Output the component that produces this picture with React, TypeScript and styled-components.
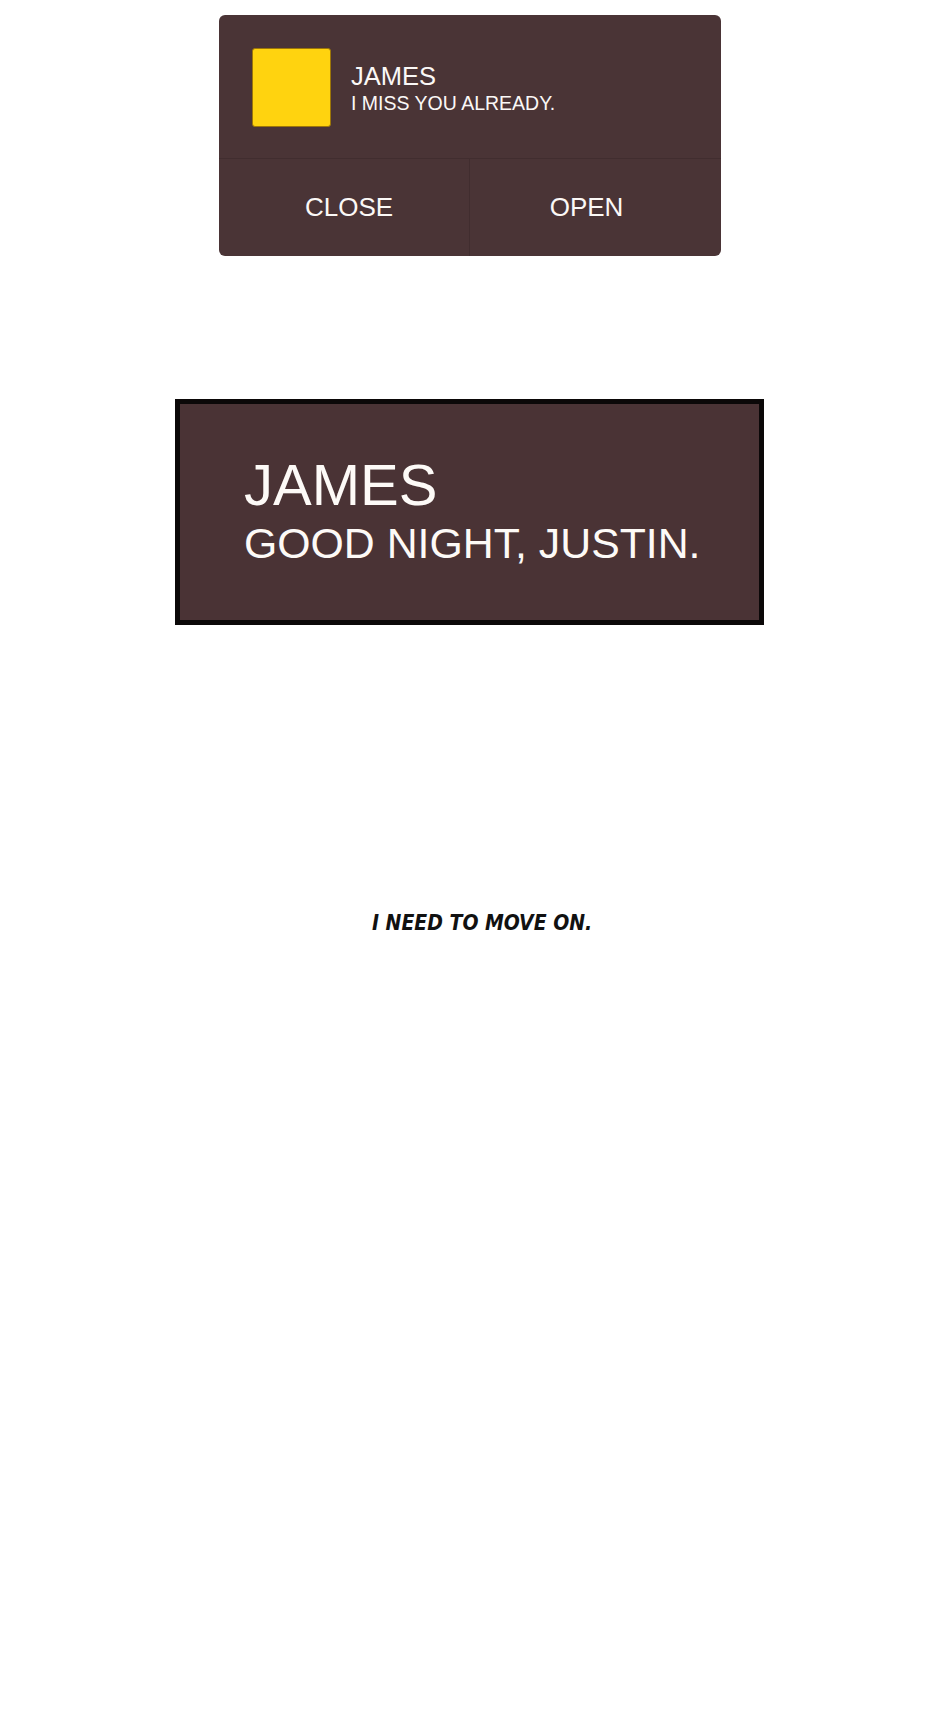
import React from "react";
import styled, { createGlobalStyle } from "styled-components";

const GlobalStyle = createGlobalStyle`
  html, body {
    margin: 0;
    padding: 0;
    background: #ffffff;
  }
  body {
    font-family: "Liberation Sans", Arial, sans-serif;
  }
`;

const Page = styled.div`
  width: 940px;
  height: 1730px;
  background: #ffffff;
  display: flex;
  flex-direction: column;
  align-items: flex-start;
  overflow: hidden;
`;

const Notice = styled.section`
  margin: 15px 0 0 219px;
  width: 502px;
  height: 241px;
  background: #4a3436;
  border-radius: 6px;
  display: flex;
  flex-direction: column;
  overflow: hidden;
  color: #fbf8f6;
`;

const NoticeBody = styled.div`
  height: 144px;
  box-sizing: border-box;
  padding: 33px 0 0 33px;
  display: flex;
  align-items: flex-start;
  gap: 20px;
  border-bottom: 1px solid #412d2f;
`;

const Avatar = styled.div`
  width: 79px;
  height: 79px;
  box-sizing: border-box;
  background: #ffd30f;
  border: 1px solid #9c7608;
  border-radius: 3px;
  flex: none;
`;

const NoticeText = styled.div`
  margin-top: 15px;
  display: flex;
  flex-direction: column;
`;

const Sender = styled.div`
  font-size: 25.5px;
  line-height: 26px;
`;

const Message = styled.div`
  font-size: 19.5px;
  line-height: 28px;
`;

const Actions = styled.div`
  flex: 1;
  display: grid;
  grid-template-columns: 1fr 1fr;
`;

const Action = styled.button<{ $padLeft?: number; $padRight?: number; $divider?: boolean }>`
  appearance: none;
  background: transparent;
  border: none;
  border-right: ${(p) => (p.$divider ? "1px solid #412d2f" : "none")};
  color: #fbf8f6;
  font-family: "Liberation Sans", Arial, sans-serif;
  font-size: 26px;
  padding: 0 ${(p) => p.$padRight ?? 0}px 0 ${(p) => p.$padLeft ?? 0}px;
  margin: 0;
  display: flex;
  align-items: center;
  justify-content: center;
  cursor: pointer;
`;

const Caption = styled.section`
  margin: 143px 0 0 175px;
  width: 589px;
  height: 226px;
  box-sizing: border-box;
  background: #4a3335;
  border: 5px solid #0b0808;
  padding: 0 0 0 64px;
  display: flex;
  flex-direction: column;
  justify-content: center;
  color: #fdfaf7;
`;

const CaptionName = styled.div`
  font-size: 58px;
  line-height: 62px;
`;

const CaptionLine = styled.div`
  font-size: 42.8px;
  line-height: 54px;
`;

const Thought = styled.p`
  margin: 286px 0 0 372px;
  font-family: "DejaVu Sans Condensed", "DejaVu Sans", sans-serif;
  font-stretch: condensed;
  font-style: oblique;
  font-weight: bold;
  font-size: 21px;
  line-height: 24px;
  letter-spacing: 0;
  color: #111111;
`;

export default function App() {
  return (
    <>
      <GlobalStyle />
      <Page>
        <Notice>
          <NoticeBody>
            <Avatar />
            <NoticeText>
              <Sender>JAMES</Sender>
              <Message>I MISS YOU ALREADY.</Message>
            </NoticeText>
          </NoticeBody>
          <Actions>
            <Action $padLeft={10} $divider>
              CLOSE
            </Action>
            <Action $padRight={18}>OPEN</Action>
          </Actions>
        </Notice>

        <Caption>
          <CaptionName>JAMES</CaptionName>
          <CaptionLine>GOOD NIGHT, JUSTIN.</CaptionLine>
        </Caption>

        <Thought>I NEED TO MOVE ON.</Thought>
      </Page>
    </>
  );
}
